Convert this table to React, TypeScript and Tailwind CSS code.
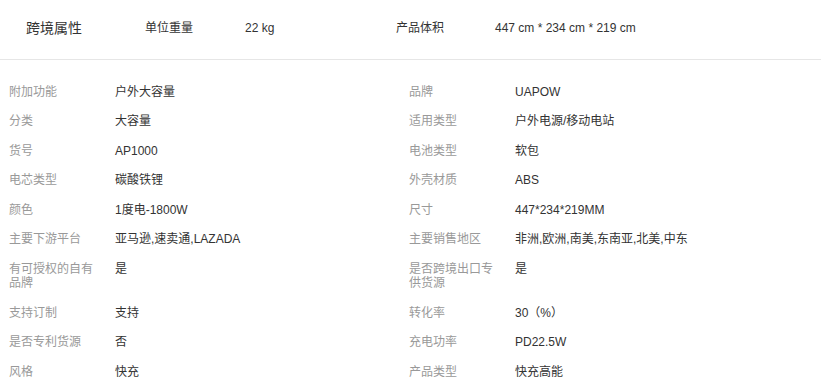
const font = { fontFamily: '"Liberation Sans", Arial, "Noto Sans CJK SC", sans-serif' };

type Attr = [string, string];

const rows: [Attr, Attr][] = [
  [['附加功能', '户外大容量'], ['品牌', 'UAPOW']],
  [['分类', '大容量'], ['适用类型', '户外电源/移动电站']],
  [['货号', 'AP1000'], ['电池类型', '软包']],
  [['电芯类型', '碳酸铁锂'], ['外壳材质', 'ABS']],
  [['颜色', '1度电-1800W'], ['尺寸', '447*234*219MM']],
  [['主要下游平台', '亚马逊,速卖通,LAZADA'], ['主要销售地区', '非洲,欧洲,南美,东南亚,北美,中东']],
  [['有可授权的自有品牌', '是'], ['是否跨境出口专供货源', '是']],
  [['支持订制', '支持'], ['转化率', '30（%）']],
  [['是否专利货源', '否'], ['充电功率', 'PD22.5W']],
  [['风格', '快充'], ['产品类型', '快充高能']],
];

function Cell({ attr }: { attr: Attr }) {
  const [label, value] = attr;
  return (
    <div className="flex w-[400px] py-[7.5px] pl-[9px] text-[12px] leading-[14.5px]">
      <div className="w-[88px] shrink-0 text-[#999]">{label}</div>
      <div className="ml-[18px] text-[#333]">{value}</div>
    </div>
  );
}

export default function App() {
  return (
    <div className="min-h-screen w-[821px] bg-white" style={font}>
      {/* Header */}
      <div className="flex h-[59px] items-center pb-[3px] text-[#333]">
        <div className="w-[145px] shrink-0 pl-[26px] text-[14px]">跨境属性</div>
        <div className="w-[100px] shrink-0 text-[12px]">单位重量</div>
        <div className="w-[151px] shrink-0 text-[12px]">22 kg</div>
        <div className="w-[99px] shrink-0 text-[12px]">产品体积</div>
        <div className="text-[12px]">447 cm * 234 cm * 219 cm</div>
      </div>
      <div className="h-px bg-[#e6e6e6]" />

      {/* Attributes */}
      <div className="flex flex-col pt-[17px]">
        {rows.map(([l, r], i) => (
          <div key={i} className="flex">
            <Cell attr={l} />
            <Cell attr={r} />
          </div>
        ))}
      </div>
    </div>
  );
}
